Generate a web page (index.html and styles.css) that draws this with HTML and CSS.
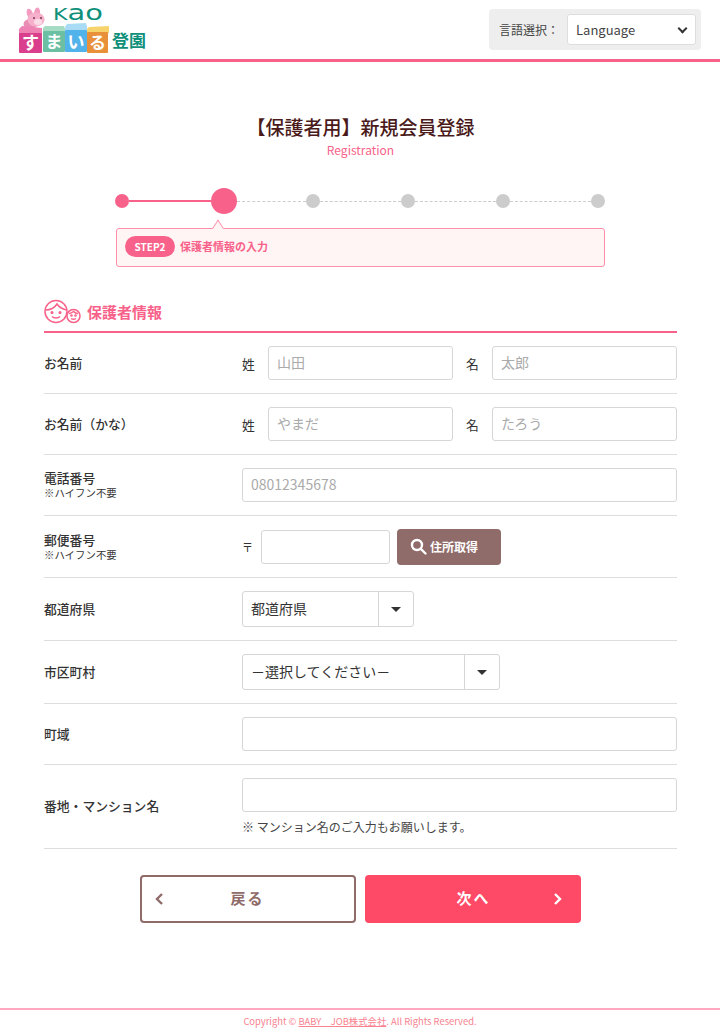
FILE: index.html
```html
<!DOCTYPE html>
<html lang="ja">
<head>
    <meta charset="UTF-8">
    <title>保護者用 新規会員登録</title>
    <link rel="stylesheet" href="styles.css">
</head>
<body>

<header class="header">
    <div class="logo">
        <svg width="132" height="56" viewBox="0 -2 132 56">
            <!-- rabbit -->
            <ellipse cx="12" cy="12" rx="3" ry="5.500" fill="#f29cc0" transform="rotate(-20 12 12)"/>
            <ellipse cx="19" cy="11" rx="3" ry="5.500" fill="#f29cc0" transform="rotate(8 19 11)"/>
            <ellipse cx="12.500" cy="22" rx="7" ry="5" fill="#ea8db5"/>
            <ellipse cx="18" cy="17.500" rx="8.500" ry="7" fill="#f6b0cc"/>
            <ellipse cx="20" cy="20" rx="4" ry="3" fill="#fbdbe6"/>
            <circle cx="16" cy="16" r="1" fill="#7a3b55"/>
            <circle cx="23" cy="16" r="1" fill="#7a3b55"/>
            <!-- blocks -->
            <path d="M1 27l3-3 20 2v6H1z" fill="#ee82b2"/>
            <rect x="1" y="31" width="23" height="20" rx="1" fill="#d93f8c"/>
            <path d="M25 26l2-2 19 0 1 3v4H25z" fill="#a7dcc4"/>
            <rect x="25" y="29" width="22" height="21" rx="1" fill="#6cbfa2"/>
            <path d="M47 25l2-3 19-1 1 4v6H47z" fill="#a9dbf5"/>
            <rect x="47" y="28" width="22" height="22" rx="1" fill="#52b3ea"/>
            <path d="M69 27l2-2 20-1v7H69z" fill="#f7d36b"/>
            <rect x="69" y="30" width="21" height="21" rx="1" fill="#e8913a"/>
            <text x="12.500" y="47" class="logo-kana">す</text>
            <text x="36" y="46" class="logo-kana">ま</text>
            <text x="58" y="46" class="logo-kana">い</text>
            <text x="79.500" y="47" class="logo-kana">る</text>
            <text x="35" y="18" class="logo-kao" textLength="50" lengthAdjust="spacingAndGlyphs"><tspan font-size="16.500">K</tspan>ao</text>
            <text x="94" y="45" class="logo-name">登園</text>
        </svg>
    </div>
    <div class="lang">
        <label for="lang">言語選択：</label>
        <span class="langsel"><select id="lang"><option>Language</option></select></span>
    </div>
</header>

<main class="main">
    <h1 class="title">【保護者用】新規会員登録</h1>
    <p class="subtitle">Registration</p>

    <div class="steps">
        <span class="dot on"></span>
        <span class="line done"></span>
        <span class="dot current"></span>
        <span class="line short"></span>
        <span class="dot"></span>
        <span class="line"></span>
        <span class="dot"></span>
        <span class="line"></span>
        <span class="dot"></span>
        <span class="line"></span>
        <span class="dot"></span>
    </div>
    <div class="stepbox">
        <span class="stepbadge">STEP2</span>
        <span>保護者情報の入力</span>
    </div>

    <h2 class="section">
        <svg width="38" height="26" viewBox="0 0 38 26" fill="none" stroke="#f8628a" stroke-width="1.500">
            <circle cx="12" cy="12.500" r="11"/>
            <path d="M1.500 11c5 0 9-2 11.500-6 2 3 5 5 9.500 6"/>
            <circle cx="8" cy="13.500" r=".8" fill="#f8628a"/>
            <circle cx="16" cy="13.500" r=".8" fill="#f8628a"/>
            <path d="M8 17.500c2 2 6 2 8 0"/>
            <circle cx="29.500" cy="17" r="6.500" fill="#fff"/>
            <path d="M25 14.500c2 0 3-1 4.500-2 1 1 3 2 4.500 2"/>
            <path d="M27 19.500c1.500 1 3.500 1 5 0"/>
            <circle cx="27.500" cy="16.500" r=".6" fill="#f8628a"/>
            <circle cx="31.500" cy="16.500" r=".6" fill="#f8628a"/>
        </svg>
        保護者情報
    </h2>

    <form class="form">
        <div class="row r61">
            <div class="label">お名前</div>
            <div class="field">
                <span class="pre">姓</span><input class="input name" placeholder="山田">
                <span class="pre second">名</span><input class="input name" placeholder="太郎">
            </div>
        </div>
        <div class="row r61">
            <div class="label">お名前（かな）</div>
            <div class="field">
                <span class="pre">姓</span><input class="input name" placeholder="やまだ">
                <span class="pre second">名</span><input class="input name" placeholder="たろう">
            </div>
        </div>
        <div class="row r61">
            <div class="label">電話番号<small>※ハイフン不要</small></div>
            <div class="field"><input class="input wide" placeholder="08012345678"></div>
        </div>
        <div class="row r62">
            <div class="label">郵便番号<small>※ハイフン不要</small></div>
            <div class="field">
                <span class="pre zip">〒</span><input class="input zipcode">
                <button type="button" class="addr">
                    <svg width="17" height="17" viewBox="0 0 17 17" fill="none" stroke="#fff" stroke-width="2.400"><circle cx="7" cy="7" r="5"/><path d="M10.800 10.800L15.500 15.500" stroke-linecap="round"/></svg>
                    住所取得
                </button>
            </div>
        </div>
        <div class="row r63">
            <div class="label">都道府県</div>
            <div class="field">
                <div class="sel pref"><span class="seltext">都道府県</span><span class="selarrow"></span></div>
            </div>
        </div>
        <div class="row r63">
            <div class="label">市区町村</div>
            <div class="field">
                <div class="sel city"><span class="seltext">－選択してください－</span><span class="selarrow"></span></div>
            </div>
        </div>
        <div class="row r61">
            <div class="label">町域</div>
            <div class="field"><input class="input wide"></div>
        </div>
        <div class="row last">
            <div class="label">番地・マンション名</div>
            <div class="field column">
                <input class="input wide">
                <p class="note">※ マンション名のご入力もお願いします。</p>
            </div>
        </div>
    </form>

    <div class="buttons">
        <button type="button" class="btn back">
            <svg width="10" height="14" viewBox="0 0 10 14" fill="none" stroke="#8f6b69" stroke-width="2.400"><path d="M8 2L3 7l5 5"/></svg>
            <span>戻る</span>
        </button>
        <button type="button" class="btn next">
            <span>次へ</span>
            <svg width="10" height="14" viewBox="0 0 10 14" fill="none" stroke="#fff" stroke-width="2.400"><path d="M2 2l5 5-5 5"/></svg>
        </button>
    </div>
</main>

<footer class="footer">Copyright © <a href="#">BABY　JOB株式会社</a>. All Rights Reserved.</footer>

</body>
</html>
```

FILE: styles.css
```css
* {
    box-sizing: border-box;
}

body {
    margin: 0;
    height: 1032px;
    overflow: hidden;
    display: flex;
    flex-direction: column;
    font-family: "Noto Sans CJK JP", "Noto Sans", sans-serif;
    color: #333;
    background: #fff;
}

/* header */
.header {
    height: 62px;
    padding: 8px 19px 0 18px;
    border-bottom: 3px solid #f8628a;
    display: flex;
    justify-content: space-between;
    align-items: flex-start;
}

.logo {
    width: 132px;
    height: 56px;
    margin-top: -8px;
}

.logo-kana {
    font-size: 17px;
    font-weight: 700;
    fill: #fff;
    text-anchor: middle;
}

.logo-kao {
    font-family: "DejaVu Sans", sans-serif;
    font-size: 21.500px;
    fill: #10907a;
}

.logo-name {
    font-size: 17px;
    font-weight: 700;
    fill: #10907a;
}

.lang {
    width: 212px;
    height: 41px;
    background: #eee;
    border-radius: 4px;
    display: flex;
    align-items: center;
    padding: 0 5px 0 10px;
    margin-top: 1px;
    font-size: 12px;
    color: #444;
    white-space: nowrap;
}

.langsel {
    position: relative;
    margin-left: auto;
    display: flex;
}

.langsel::after {
    content: "";
    position: absolute;
    right: 10px;
    top: 11px;
    width: 5px;
    height: 5px;
    border-right: 2px solid #333;
    border-bottom: 2px solid #333;
    transform: rotate(45deg);
}

.langsel select {
    width: 129px;
    height: 31px;
    padding: 0 4px 0 8px;
    font-family: inherit;
    font-size: 13px;
    color: #444;
    background: #fff;
    border: 1px solid #ddd;
    border-radius: 3px;
    appearance: none;
}

/* main */
.main {
    flex: 1;
    padding: 0 43px 0 44px;
}

.title {
    margin: 51px 0 0;
    text-align: center;
    font-size: 19px;
    font-weight: 500;
    line-height: 28px;
    color: #4a1a1a;
}

.subtitle {
    margin: 0;
    text-align: center;
    font-size: 12px;
    line-height: 18px;
    color: #f8628a;
}

/* steps */
.steps {
    display: flex;
    align-items: center;
    margin: 29px 72px 0 71px;
    height: 26px;
}

.dot {
    flex: none;
    width: 14px;
    height: 14px;
    border-radius: 50%;
    background: #ccc;
}

.dot.on,
.dot.current {
    background: #f8628a;
}

.dot.current {
    width: 26px;
    height: 26px;
}

.line {
    flex: none;
    width: 81px;
    border-top: 1px dashed #ccc;
}

.line.done {
    width: 82px;
    border-top: 2px solid #f8628a;
}

.line.short {
    width: 69px;
}

.stepbox {
    position: relative;
    height: 39px;
    margin: 14px 72px 0 72px;
    padding: 0 8px 3px;
    display: flex;
    align-items: center;
    gap: 5px;
    background: #fff5f5;
    border: 1px solid #ff8fab;
    border-radius: 3px;
    font-size: 11px;
    font-weight: 700;
    color: #f8628a;
}

.stepbox::before {
    content: "";
    position: absolute;
    left: 96px;
    top: -6px;
    width: 9px;
    height: 9px;
    background: #fff5f5;
    border-left: 1px solid #ff8fab;
    border-top: 1px solid #ff8fab;
    transform: rotate(45deg) skew(12deg, 12deg);
}

.stepbadge {
    width: 50px;
    height: 21px;
    border-radius: 11px;
    background: #f8628a;
    color: #fff;
    text-align: center;
    font-size: 10px;
    line-height: 21px;
}

/* section heading */
.section {
    display: flex;
    align-items: center;
    gap: 5px;
    height: 38px;
    margin: 28px 0 0;
    padding-bottom: 3px;
    border-bottom: 2px solid #f8628a;
    font-size: 15px;
    font-weight: 700;
    color: #f8628a;
}

/* form rows */
.row {
    display: flex;
    align-items: center;
    border-bottom: 1px solid #ddd;
}

.r61 {
    height: 61px;
}

.r62 {
    height: 62px;
}

.r63 {
    height: 63px;
}

.row.last {
    height: 84px;
    align-items: flex-start;
    padding-top: 13px;
}

.row.last .label {
    margin-top: 20px;
}

.label {
    flex: none;
    width: 198px;
    font-size: 12.800px;
    font-weight: 500;
    line-height: 16px;
}

.label small {
    display: block;
    font-size: 10.400px;
    font-weight: 400;
    line-height: 14px;
}

.field {
    flex: 1;
    display: flex;
    align-items: center;
}

.field.column {
    flex-direction: column;
    align-items: flex-start;
}

.pre {
    flex: none;
    width: 26px;
    font-size: 12.800px;
}

.pre.second {
    width: 26px;
    margin-left: 13px;
}

.pre.zip {
    width: 19px;
    font-size: 11px;
}

.input {
    height: 34px;
    padding: 0 8px 3px;
    font-family: inherit;
    font-size: 14px;
    color: #333;
    background: #fff;
    border: 1px solid #d6d6d6;
    border-radius: 3px;
    outline: none;
}

.input::placeholder {
    color: #aaa;
}

.input.name {
    width: 185px;
}

.input.wide {
    width: 435px;
}

.input.zipcode {
    width: 129px;
    margin-right: 7px;
}

.addr {
    width: 104px;
    height: 36px;
    padding: 0 0 0 13px;
    display: flex;
    align-items: center;
    gap: 3px;
    font-family: inherit;
    font-size: 12px;
    font-weight: 700;
    color: #fff;
    background: #8f6b69;
    border: 0;
    border-radius: 4px;
}

.sel {
    height: 36px;
    display: flex;
    border: 1px solid #d6d6d6;
    border-radius: 3px;
    font-size: 14px;
    line-height: 32px;
}

.sel.pref {
    width: 172px;
}

.sel.city {
    width: 258px;
}

.seltext {
    flex: 1;
    padding-left: 8px;
}

.selarrow {
    width: 35px;
    border-left: 1px solid #d6d6d6;
    display: flex;
    align-items: center;
    justify-content: center;
}

.selarrow::after {
    content: "";
    border-top: 5px solid #333;
    border-left: 5px solid transparent;
    border-right: 5px solid transparent;
}

.note {
    margin: 7px 0 0;
    font-size: 12px;
    line-height: 16px;
    color: #444;
}

/* bottom buttons */
.buttons {
    display: flex;
    justify-content: center;
    gap: 9px;
    margin-top: 26px;
    padding-right: 1px;
}

.btn {
    width: 216px;
    height: 48px;
    padding: 0 16px 3px 12px;
    display: flex;
    align-items: center;
    font-family: inherit;
    font-size: 15px;
    font-weight: 700;
    letter-spacing: 2px;
    border-radius: 4px;
}

.btn span {
    flex: 1;
    text-align: center;
}

.btn svg {
    margin-top: 3px;
}

.btn.back {
    color: #8f6b69;
    background: #fff;
    border: 2px solid #8f6b69;
}

.btn.back span {
    padding-right: 6px;
}

.btn.next {
    padding: 0 18px 3px 12px;
    color: #fff;
    background: #ff4a67;
    border: 0;
}

.btn.next span {
    padding-left: 18px;
}

/* footer */
.footer {
    height: 24px;
    border-top: 2px solid #ffa6c0;
    text-align: center;
    font-size: 9.400px;
    line-height: 22px;
    color: #f8828f;
}

.footer a {
    color: inherit;
}
```
